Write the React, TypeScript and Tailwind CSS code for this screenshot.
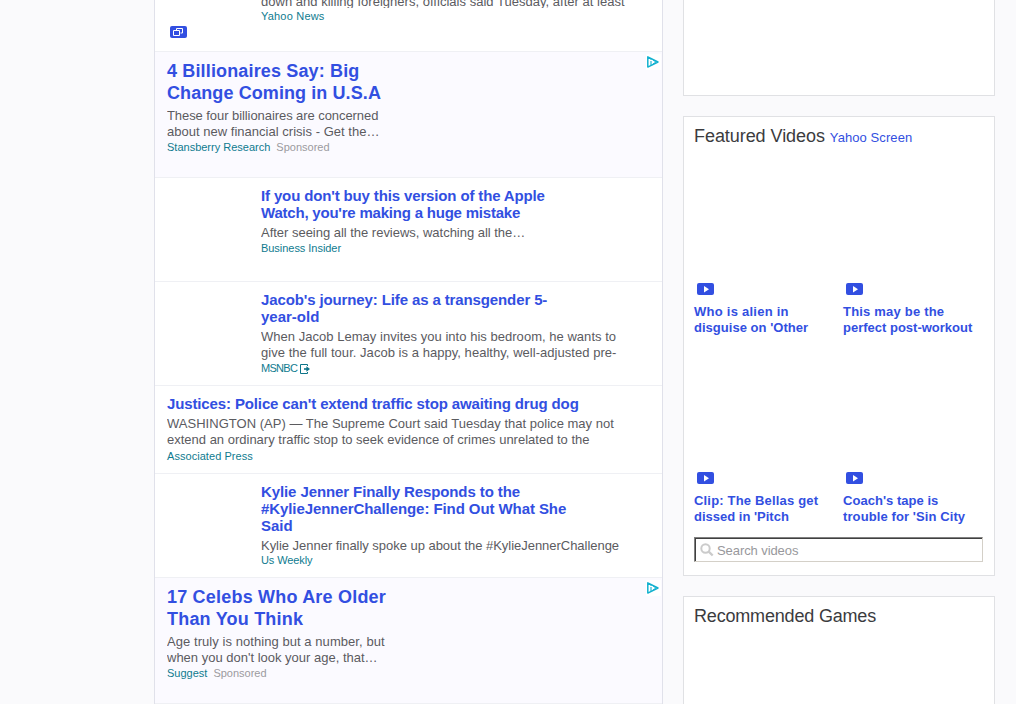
import type { ReactNode } from "react";

type LineSpec = { text: string; fit?: string };

function Lines({ items, line }: { items: LineSpec[]; line: string }) {
  return (
    <>
      {items.map((l) => (
        <span key={l.text} className={`block whitespace-nowrap ${line} ${l.fit ?? ""}`}>
          {l.text}
        </span>
      ))}
    </>
  );
}

function AdMark() {
  return (
    <span className="absolute right-px top-[2px] h-[16px] w-[15px] bg-white pl-px pt-[2px]">
      <svg width="12" height="12" viewBox="0 0 12 12" fill="none" className="block">
        <path d="M.8.9v10.2L11 6z" stroke="#12b1cf" strokeWidth="1.5" strokeLinejoin="round" />
        <path d="M4 3v1M4 5v4" stroke="#12b1cf" strokeWidth="1.1" />
        <path d="M6 4.2L9 6 6 7.8" stroke="#12b1cf" strokeWidth=".8" />
      </svg>
    </span>
  );
}

function SlidesBadge() {
  return (
    <svg width="17" height="12" viewBox="0 0 17 12" fill="none">
      <rect width="17" height="12" rx="2" fill="#324fe1" />
      <path d="M6.5 4.5V2.5h6v4.5h-2" stroke="#fff" />
      <path d="M3.5 4.5h6v5h-6z" stroke="#fff" />
    </svg>
  );
}

function PlayBadge() {
  return (
    <svg width="17" height="12" viewBox="0 0 17 12" className="ml-[3px] block">
      <rect width="17" height="12" rx="2" fill="#324fe1" />
      <path d="M7 3v6.4l5-3.2z" fill="#fff" />
    </svg>
  );
}

function ExternalMark() {
  return (
    <svg width="10" height="10" viewBox="0 0 10 10" fill="none" className="ml-[3px] block">
      <path d="M7.5 2V.5h-7v9h7V8" stroke="#0c7489" />
      <path d="M4 5h3" stroke="#0c7489" strokeWidth="1.6" />
      <path d="M6.4 2.2v5.6L10 5z" fill="#0c7489" />
    </svg>
  );
}

function Ad(props: { title: LineSpec[]; body: LineSpec[]; source: string }) {
  return (
    <article className="relative h-[126px] border-b border-[#eff0f4] bg-[#fbfaff] pl-3 pt-2">
      <AdMark />
      <h3 className="text-[18px] font-bold leading-[22px] text-[#324fe1]">
        <Lines items={props.title} line="h-[22px]" />
      </h3>
      <p className="mt-1 h-[31px] overflow-hidden text-[13px] leading-4 text-[#5b5b5f]">
        <Lines items={props.body} line="h-4" />
      </p>
      <p className="flex gap-1.5 text-[11px] leading-4 text-[#0f7b8f]">
        <span>{props.source}</span>
        <span className="text-[#9b9ba0]">Sponsored</span>
      </p>
    </article>
  );
}

function Story(props: {
  box: string;
  title: LineSpec[];
  body: LineSpec[];
  bodyBox: string;
  source: string;
  sourceFit?: string;
  mark?: ReactNode;
}) {
  return (
    <article className={`border-b border-[#eff0f4] bg-white pt-[9px] ${props.box}`}>
      <h3 className="text-[15px] font-bold leading-[17px] text-[#324fe1]">
        <Lines items={props.title} line="h-[17px]" />
      </h3>
      <p className={`mt-1 overflow-hidden text-[13px] leading-4 text-[#5b5b5f] ${props.bodyBox}`}>
        <Lines items={props.body} line="h-4" />
      </p>
      <p className="flex items-center text-[11px] leading-[15px] text-[#0f7b8f]">
        <span className={props.sourceFit}>{props.source}</span>
        {props.mark}
      </p>
    </article>
  );
}

function Video({ title }: { title: LineSpec[] }) {
  return (
    <div className="pt-[121px]">
      <PlayBadge />
      <h4 className="mt-[9px] h-[47px] text-[13px] font-bold leading-4 text-[#324fe1]">
        <Lines items={title} line="h-4" />
      </h4>
    </div>
  );
}

export default function App() {
  return (
    <div className="flex h-[704px] w-[1016px] overflow-hidden bg-[#fafafc] font-['Liberation_Sans',Arial,sans-serif]">
      <main className="ml-[154px] w-[509px] shrink-0 border-x border-[#e0e1ea]">
        <article className="flow-root h-[52px] border-b border-[#eff0f4] bg-white">
          <p className="-mt-[6px] h-[14px] overflow-hidden pl-[106px] text-[13px] leading-4 text-[#5b5b5f]">
            <Lines line="h-4" items={[{ text: "down and killing foreigners, officials said Tuesday, after at least", fit: "tracking-[0.02px]" }]} />
          </p>
          <p className="mt-px h-[17px] pl-[106px] text-[11px] leading-[15px] tracking-[0.2px] text-[#0f7b8f]">Yahoo News</p>
          <div className="pl-[15px]"><SlidesBadge /></div>
        </article>
        <Ad
          title={[{ text: "4 Billionaires Say: Big", fit: "tracking-[0.15px]" }, { text: "Change Coming in U.S.A", fit: "tracking-[0.09px]" }]}
          body={[{ text: "These four billionaires are concerned", fit: "tracking-[-0.07px]" }, { text: "about new financial crisis - Get the…", fit: "tracking-[0.02px]" }]}
          source="Stansberry Research"
        />
        <Story
          box="h-[104px] pl-[106px]"
          title={[{ text: "If you don't buy this version of the Apple", fit: "tracking-[-0.14px]" }, { text: "Watch, you're making a huge mistake", fit: "tracking-[-0.21px]" }]}
          body={[{ text: "After seeing all the reviews, watching all the…", fit: "tracking-[-0.02px]" }]}
          bodyBox="h-4"
          source="Business Insider"
          sourceFit="tracking-[-0.04px]"
        />
        <Story
          box="h-[104px] pl-[106px]"
          title={[{ text: "Jacob's journey: Life as a transgender 5-", fit: "tracking-[-0.12px]" }, { text: "year-old" }]}
          body={[{ text: "When Jacob Lemay invites you into his bedroom, he wants to", fit: "tracking-[0.03px]" }, { text: "give the full tour. Jacob is a happy, healthy, well-adjusted pre-", fit: "tracking-[0.04px]" }]}
          bodyBox="h-8"
          source="MSNBC"
          sourceFit="tracking-[-0.7px]"
          mark={<ExternalMark />}
        />
        <Story
          box="h-[88px] pl-3"
          title={[{ text: "Justices: Police can't extend traffic stop awaiting drug dog", fit: "tracking-[-0.13px]" }]}
          body={[{ text: "WASHINGTON (AP) — The Supreme Court said Tuesday that police may not", fit: "tracking-[0.02px]" }, { text: "extend an ordinary traffic stop to seek evidence of crimes unrelated to the" }]}
          bodyBox="h-[33px]"
          source="Associated Press"
          sourceFit="tracking-[0.05px]"
        />
        <Story
          box="h-[104px] pl-[106px]"
          title={[{ text: "Kylie Jenner Finally Responds to the", fit: "tracking-[-0.1px]" }, { text: "#KylieJennerChallenge: Find Out What She", fit: "tracking-[-0.08px]" }, { text: "Said" }]}
          body={[{ text: "Kylie Jenner finally spoke up about the #KylieJennerChallenge", fit: "tracking-[-0.03px]" }]}
          bodyBox="h-[15px]"
          source="Us Weekly"
          sourceFit="tracking-[-0.1px]"
        />
        <Ad
          title={[{ text: "17 Celebs Who Are Older", fit: "tracking-[0.2px]" }, { text: "Than You Think", fit: "tracking-[0.2px]" }]}
          body={[{ text: "Age truly is nothing but a number, but", fit: "tracking-[0.06px]" }, { text: "when you don't look your age, that…" }]}
          source="Suggest"
        />
      </main>

      <aside className="ml-5 flex w-[312px] shrink-0 flex-col gap-5">
        <section className="h-24 shrink-0 border border-t-0 border-[#e0e1e4] bg-white" />
        <section className="h-[460px] shrink-0 border border-[#e0e1e4] bg-white px-[10px] pt-2">
          <h2 className="flex h-[22px] items-baseline gap-[5px] whitespace-nowrap text-[18px] leading-[22px] text-[#3b3b3e]">
            <span className="tracking-[-0.06px]">Featured Videos</span>
            <span className="text-[13px] tracking-[0.08px] text-[#324fe1]">Yahoo Screen</span>
          </h2>
          <div className="mt-[15px] grid grid-cols-[149px_1fr]">
            <Video title={[{ text: "Who is alien in", fit: "tracking-[0.25px]" }, { text: "disguise on 'Other", fit: "tracking-[0.03px]" }]} />
            <Video title={[{ text: "This may be the", fit: "tracking-[0.2px]" }, { text: "perfect post-workout" }]} />
            <Video title={[{ text: "Clip: The Bellas get", fit: "tracking-[0.18px]" }, { text: "dissed in 'Pitch" }]} />
            <Video title={[{ text: "Coach's tape is", fit: "tracking-[0.03px]" }, { text: "trouble for 'Sin City", fit: "tracking-[0.1px]" }]} />
          </div>
          <div className="-mt-[3px] h-[25px] w-[289px] border border-b-[#d4d0c8] border-l-[#808080] border-r-[#d4d0c8] border-t-[#808080]">
            <div className="flex h-[23px] items-center gap-[3px] border-l border-t border-[#404040] pl-1 text-[13px] text-[#98989c]">
              <svg width="14" height="14" viewBox="0 0 14 14" fill="none" stroke="#cbcbcb" strokeWidth="2">
                <circle cx="5.5" cy="5.5" r="4.2" />
                <path d="M8.7 8.7l4 3.8" strokeWidth="2.4" />
              </svg>
              <span className="pt-px tracking-[-0.08px]">Search videos</span>
            </div>
          </div>
        </section>
        <section className="h-[120px] shrink-0 border border-[#e0e1e4] bg-white px-[10px] pt-2">
          <h2 className="text-[18px] leading-[22px] tracking-[-0.18px] text-[#3b3b3e]">Recommended Games</h2>
        </section>
      </aside>
    </div>
  );
}
